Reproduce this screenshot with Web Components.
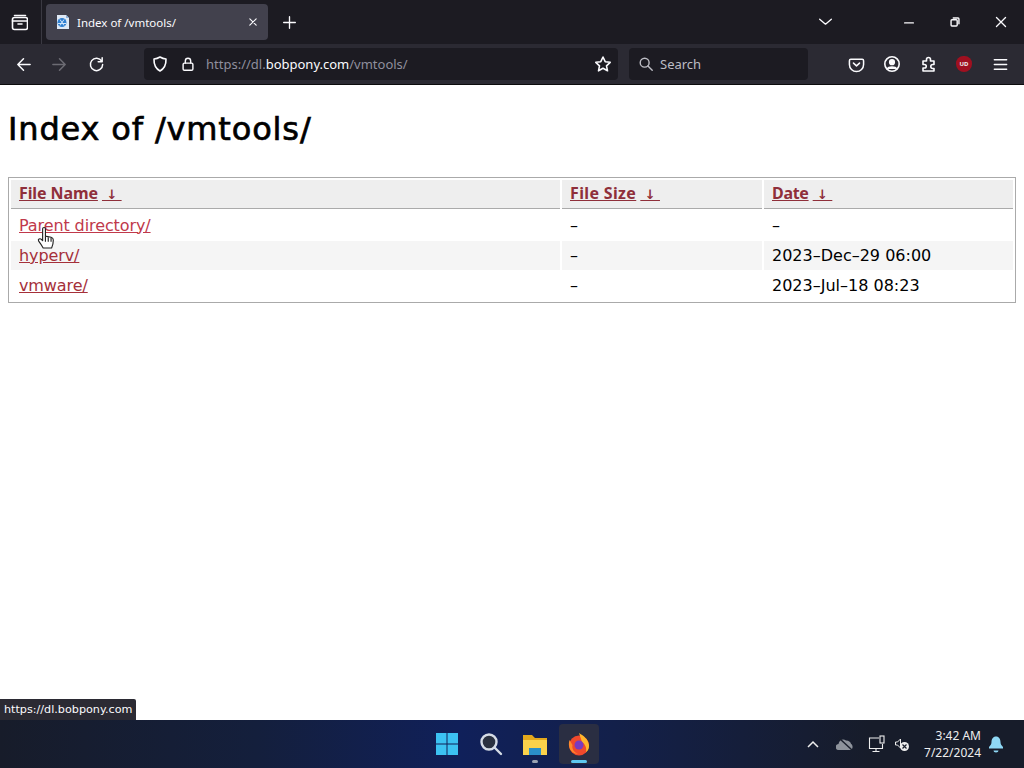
<!DOCTYPE html>
<html lang="en">
<head>
<meta charset="utf-8">
<title>Index of /vmtools/</title>
<style>
    html, body { margin: 0; height: 100%; }
    body { display: flex; flex-direction: column; height: 768px; overflow: hidden; background: #fff; font-family: "DejaVu Sans", sans-serif; }
</style>
</head>
<body>
<browser-tabbar></browser-tabbar>
<browser-navbar></browser-navbar>
<page-view>
    <dir-listing heading="Index of /vmtools/"></dir-listing>
    <status-tip slot="status">https://dl.bobpony.com</status-tip>
</page-view>
<win-taskbar></win-taskbar>

<script>
// Stroke icons shared by the browser chrome
const ICONS = {
    tabs: '<rect x="2.5" y="4.5" width="15" height="12" rx="2"/><path d="M4.5 2.5h11M2.5 8h15M8 11h4"/>',
    plus: '<path d="M9 2v14M2 9h14"/>',
    close: '<path d="M4 4l9 9M13 4l-9 9"/>',
    chevron: '<path d="M2 5l7 6 7-6"/>',
    minimize: '<path d="M3 9h10"/>',
    restore: '<rect x="3.5" y="5.5" width="7" height="7" rx="1"/><path d="M6 3.5h5.5a1 1 0 0 1 1 1V10"/>',
    winclose: '<path d="M3 3l11 11M14 3L3 14"/>',
    back: '<path d="M16 9H3M9 3L3 9l6 6"/>',
    reload: '<path d="M14.5 5.5A6.5 6.5 0 1 0 15.5 9M15 1.8v4.2h-4.2"/>',
    shield: '<path d="M9 2c2 1.2 4 1.8 6 2 .2 5.5-1.5 9.5-6 12-4.5-2.5-6.2-6.5-6-12 2-.2 4-.8 6-2z"/>',
    lock: '<rect x="3.5" y="8" width="11" height="8" rx="1.5"/><path d="M6 8V5.5a3 3 0 0 1 6 0V8"/>',
    star: '<path d="M9 2l2.2 4.7 5 .6-3.7 3.5 1 5L9 13.3 4.5 15.8l1-5L1.8 7.3l5-.6z"/>',
    search: '<circle cx="7.5" cy="7.5" r="5"/><path d="M11.2 11.2L16 16"/>',
    pocket: '<path d="M3 3.5h12a1.5 1.5 0 0 1 1.5 1.5v4a7.5 7.5 0 0 1-15 0V5A1.5 1.5 0 0 1 3 3.5z"/><path d="M5.8 7.5L9 10.5l3.2-3"/>',
    account: '<circle cx="9" cy="9" r="7.2"/><circle cx="9" cy="7.2" r="2.3" fill="currentColor"/><path d="M4.5 14c1-2.5 8-2.5 9 0" fill="currentColor"/>',
    puzzle: '<path d="M3 6h3.5V4.5a2 2 0 0 1 4 0V6H14v3.5h-1.2a2 2 0 0 0 0 4H14V16H3v-3h1.5a1.7 1.7 0 0 0 0-3.5H3z"/>',
    menu: '<path d="M2.5 4h13M2.5 9h13M2.5 14h13"/>'
};

// svg markup for one of the icons above
function icon(name, size = 18, box = 18) {
    return `<svg width="${size}" height="${size}" viewBox="0 0 ${box} ${box}" fill="none" stroke="currentColor" stroke-width="1.6" stroke-linecap="round" stroke-linejoin="round">${ICONS[name]}</svg>`;
}

class BrowserTabbar extends HTMLElement {
    connectedCallback() {
        this.attachShadow({mode: 'open'}).innerHTML = `
            <style>
                :host { display: flex; align-items: center; flex: none; height: 44px; background: #1c1b22; color: #fbfbfe; font: 11.5px "Noto Sans", sans-serif; }
                .tabs-btn { display: flex; justify-content: center; width: 42px; height: 44px; padding-right: 4px; align-items: center; border-right: 1px solid #3a3942; box-sizing: border-box; }
                .tab { display: flex; align-items: center; gap: 6px; width: 222px; height: 36px; margin-left: 4px; padding: 0 9px; box-sizing: border-box; background: #42414d; border-radius: 4px; }
                .tab span { flex: 1; white-space: nowrap; }
                .new { display: flex; margin-left: 14px; }
                .spacer { flex: 1; }
                .win { display: flex; align-items: center; justify-content: center; width: 46px; height: 44px; }
                .list { display: flex; margin-right: 53px; }
            </style>
            <div class="tabs-btn">${icon('tabs', 18)}</div>
            <div class="tab">
                <svg width="16" height="16" viewBox="0 0 16 16"><path d="M2 1h9l3 3v11H2z" fill="#dfe9f5"/><path d="M11 1l3 3h-3z" fill="#8fb4dc"/><circle cx="7" cy="8.5" r="4.5" fill="#2f7fd0"/><path d="M3 9.5h8M5 5.5l4 6M9 5.5l-4 6" stroke="#cfe4fa" fill="none"/></svg>
                <span>Index of /vmtools/</span>
                ${icon('close', 12, 17)}
            </div>
            <div class="new">${icon('plus', 15)}</div>
            <div class="spacer"></div>
            <div class="list">${icon('chevron', 15)}</div>
            <div class="win">${icon('minimize', 14, 16)}</div>
            <div class="win">${icon('restore', 14, 16)}</div>
            <div class="win">${icon('winclose', 14, 17)}</div>
        `;
    }
}

class BrowserNavbar extends HTMLElement {
    connectedCallback() {
        this.attachShadow({mode: 'open'}).innerHTML = `
            <style>
                :host { display: flex; align-items: center; flex: none; height: 41px; box-sizing: border-box; border-bottom: 1px solid #0c0c0d; background: #2b2a33; color: #fbfbfe; font: 13px "Noto Sans", sans-serif; }
                .btn { display: flex; align-items: center; justify-content: center; width: 36px; }
                .btn.first { margin-left: 5px; }
                .btn.off { margin-left: 1px; color: #6c6b73; transform: scaleX(-1); }
                .url { display: flex; align-items: center; width: 474px; height: 32px; margin-left: 30px; padding: 0 6px 0 7px; box-sizing: border-box; background: #1c1b22; border-radius: 4px; }
                .url .i { display: flex; margin-right: 11px; }
                .url .i.lock { margin-right: 10px; }
                .url .addr { flex: 1; color: #8f8f9d; white-space: nowrap; }
                .url b { font-weight: 400; color: #fbfbfe; }
                .find { display: flex; align-items: center; gap: 6px; width: 179px; height: 32px; margin-left: 11px; padding-left: 9px; box-sizing: border-box; background: #1c1b22; border-radius: 4px; color: #bdbdc4; }
                .tools { display: flex; margin-left: 30px; }
                .puzzle { transform: translateX(1px); }
                .ublock { width: 16px; height: 16px; border-radius: 50% 50% 55% 55%; background: #a01020; color: #eee; font: 700 6px "Noto Sans", sans-serif; display: flex; align-items: center; justify-content: center; }
            </style>
            <div class="btn first">${icon('back', 17)}</div>
            <div class="btn off">${icon('back', 17)}</div>
            <div class="btn">${icon('reload', 17)}</div>
            <div class="url">
                <span class="i">${icon('shield', 18)}</span>
                <span class="i lock">${icon('lock', 16)}</span>
                <span class="addr">https://dl.<b>bobpony.com</b>/vmtools/</span>
                ${icon('star', 18)}
            </div>
            <div class="find">${icon('search', 16)}<span>Search</span></div>
            <div class="tools">
                <div class="btn">${icon('pocket', 17)}</div>
                <div class="btn">${icon('account', 18)}</div>
                <div class="btn puzzle">${icon('puzzle', 18)}</div>
                <div class="btn"><span class="ublock">UD</span></div>
                <div class="btn">${icon('menu', 17)}</div>
            </div>
        `;
    }
}

class PageView extends HTMLElement {
    connectedCallback() {
        this.attachShadow({mode: 'open'}).innerHTML = `
            <style>
                :host { display: block; position: relative; flex: 1; min-height: 0; background: #fff; }
                ::slotted([slot="status"]) { position: absolute; left: 0; bottom: 0; }
            </style>
            <slot></slot>
            <slot name="status"></slot>
        `;
    }
}

class DirListing extends HTMLElement {
    connectedCallback() {
        const rows = [
            ['Parent directory/', '–', '–'],
            ['hyperv/', '–', '2023–Dec–29 06:00'],
            ['vmware/', '–', '2023–Jul–18 08:23']
        ];
        const sortLink = (label, style = '') => `<a href="#" style="${style}">${label}</a>&nbsp;<a href="#" class="arrow">&nbsp;↓&nbsp;</a>`;
        this.attachShadow({mode: 'open'}).innerHTML = `
            <style>
                :host { display: block; padding: 0 8px; font: 16px "DejaVu Sans", sans-serif; color: #000; }
                h1 { margin: 0; padding-top: 22px; height: 70px; font-size: 32px; line-height: 45px; font-weight: 400; letter-spacing: .85px; -webkit-text-stroke: .7px #000; }
                table { width: 100%; box-sizing: border-box; border: 1px solid #aaa; border-spacing: 2px 1px; padding: 1px 0 1px; table-layout: fixed; }
                th { height: 26px; padding: 0 8px 2px; background: #eee; border-bottom: 1px solid #aaa; text-align: left; font: 700 16px "Noto Sans", sans-serif; letter-spacing: -.1px; }
                td { height: 29px; padding: 0 8px; white-space: nowrap; }
                tr:first-child td { height: 30px; }
                tr.alt td { background: #f5f5f5; }
                a { color: #a5303a; }
                td a { letter-spacing: -.1px; }
                th a { color: #8f2f3a; }
                th a.arrow { font: 700 13px "DejaVu Sans", sans-serif; }
                a.hover { color: #c0394b; }
            </style>
            <h1>${this.getAttribute('heading')}</h1>
            <table>
                <colgroup><col style="width: 549px"><col style="width: 200px"><col></colgroup>
                <thead>
                    <tr>
                        <th>${sortLink('File Name')}</th>
                        <th>${sortLink('File Size', 'letter-spacing: .35px')}</th>
                        <th>${sortLink('Date', 'letter-spacing: -.3px')}</th>
                    </tr>
                </thead>
                <tbody>
                    ${rows.map((r, i) => `
                        <tr class="${i === 1 ? 'alt' : ''}">
                            <td><a href="#" class="${i === 0 ? 'hover' : ''}">${r[0]}</a></td><td>${r[1]}</td><td>${r[2]}</td>
                        </tr>`).join('')}
                </tbody>
            </table>
            <!-- mouse pointer over the first link -->
            <svg style="position:absolute;left:37px;top:141px" width="18" height="27" viewBox="0 0 16 24"><path d="M5 2.5c0-1.5 2.5-1.5 2.5 0V9l5 1c1.5.4 2 1 2 2.5 0 3-.5 5-1.5 7H5.5C4 17 3 15.5 1.5 13.5c-1-1.5 1-3 2.5-1.5l1 1z" fill="#fff" stroke="#222" stroke-width="1" stroke-linejoin="round"/><path d="M7.5 9v5M10 10v4M12.5 10.5V14" stroke="#222" fill="none"/></svg>
        `;
    }
}

class StatusTip extends HTMLElement {
    connectedCallback() {
        this.attachShadow({mode: 'open'}).innerHTML = `
            <style>
                :host { display: block; height: 21px; padding: 0 4px; background: #2b2a33; color: #fbfbfe; font: 11.2px/21px "DejaVu Sans", sans-serif; border-top-right-radius: 2px; white-space: nowrap; }
            </style>
            <slot></slot>
        `;
    }
}

class WinTaskbar extends HTMLElement {
    connectedCallback() {
        this.attachShadow({mode: 'open'}).innerHTML = `
            <style>
                :host { display: grid; grid-template-columns: 1fr auto 1fr; align-items: center; flex: none; height: 48px; color: #fff; background: linear-gradient(90deg, #171c2a 0%, #141f3c 25%, #10205a 45%, #13204a 60%, #171c2a 85%); font: 12px "Noto Sans", sans-serif; }
                .apps { grid-column: 2; display: flex; gap: 4px; padding-left: 2px; }
                .app { position: relative; display: flex; align-items: center; justify-content: center; width: 40px; height: 40px; border-radius: 4px; }
                .app.on { background: #2a2e42; }
                .app i { position: absolute; bottom: 1px; left: 50%; height: 3px; transform: translateX(-50%); border-radius: 2px; }
                .tray { justify-self: end; display: flex; align-items: center; padding-right: 14px; color: #eee; }
                .t { display: flex; justify-content: center; width: 32px; }
                .clock { text-align: right; line-height: 17px; margin: 0 1px 0 13px; }
            </style>
            <div class="apps">
                <div class="app"><svg width="24" height="24" viewBox="0 0 24 24"><path d="M1 1h10.5v10.5H1zM12.5 1H23v10.5H12.5zM1 12.5h10.5V23H1zM12.5 12.5H23V23H12.5z" fill="#3cc2f2"/></svg></div>
                <div class="app"><svg width="26" height="26" viewBox="0 0 26 26" fill="none" stroke="#d5dce6" stroke-width="2.4"><circle cx="11" cy="11" r="7.5" fill="#2a3140"/><path d="M16.5 16.5L23 23" stroke-linecap="round"/></svg></div>
                <div class="app"><svg width="26" height="24" viewBox="0 0 26 24"><path d="M1 3h9l3 3h12v4H1z" fill="#e3a81c"/><path d="M1 8h24v15H1z" fill="#fbd24b"/><path d="M7 16h12v7H7z" fill="#2a8fc9"/></svg><i style="width:6px;background:#9ba3b2"></i></div>
                <div class="app on"><svg width="24" height="24" viewBox="0 0 24 24"><circle cx="12" cy="13.5" r="10" fill="#f0492c"/><path d="M12 1c5 3 9 6 10 12 .4 3-1 6-3 7 1-4-1-8-4-10-1-3-2-6-3-9z" fill="#ffb52b"/><path d="M2.5 8c-1 3-1 7 1 10 2 2.5 5 4 8 4-4-1-7-5-6-9z" fill="#ff8a2b"/><circle cx="12" cy="13" r="4.5" fill="#7a3bc0"/></svg><i style="width:16px;background:#5ec8f0"></i></div>
            </div>
            <div class="tray">
                <div class="t"><svg width="12" height="8" viewBox="0 0 12 8" fill="none" stroke="currentColor" stroke-width="1.5"><path d="M1 7l5-5 5 5"/></svg></div>
                <div class="t"><svg width="18" height="14" viewBox="0 0 18 14"><path d="M3 13a3 3 0 0 1-.5-6C3 3 7 1 10 3.5c3 0 5 2 5 3.5 2 .5 2.5 6-1 6z" fill="#8e939c"/><path d="M3 1l13 12" stroke="#1a1f2c" stroke-width="1.5"/></svg></div>
                <div class="t"><svg width="18" height="18" viewBox="0 0 18 18" fill="none" stroke="currentColor" stroke-width="1.1"><path d="M11 3H1.5v10.5h13V9M8 13.5V16M4.5 16.5h7"/><rect x="12" y="1" width="4" height="7"/></svg></div>
                <div class="t" style="width: 18px"><svg width="16" height="16" viewBox="0 0 16 16"><path d="M1.5 6h2l3-3v9l-3-3h-2z" fill="none" stroke="#eee"/><circle cx="10.5" cy="10.5" r="4.5" fill="#eee"/><path d="M8.5 8.5l4 4M12.5 8.5l-4 4" stroke="#1a1f2c" stroke-width="1.2"/></svg></div>
                <div class="clock">3:42 AM<br>7/22/2024</div>
                <div class="t" style="width: 28px"><svg width="16" height="18" viewBox="0 0 16 18"><path d="M8 1.5c3 0 4.5 2.5 4.5 5.5 0 2 1 3.5 2.500 5v1.500H1V12c1.500-1.500 2.500-3 2.500-5C3.500 4 5 1.500 8 1.500z" fill="#8fd8f5"/><path d="M5.5 15.5h5a2.500 2 0 0 1-5 0z" fill="#8fd8f5"/></svg></div>
            </div>
        `;
    }
}

customElements.define('browser-tabbar', BrowserTabbar);
customElements.define('browser-navbar', BrowserNavbar);
customElements.define('page-view', PageView);
customElements.define('dir-listing', DirListing);
customElements.define('status-tip', StatusTip);
customElements.define('win-taskbar', WinTaskbar);
</script>
</body>
</html>
